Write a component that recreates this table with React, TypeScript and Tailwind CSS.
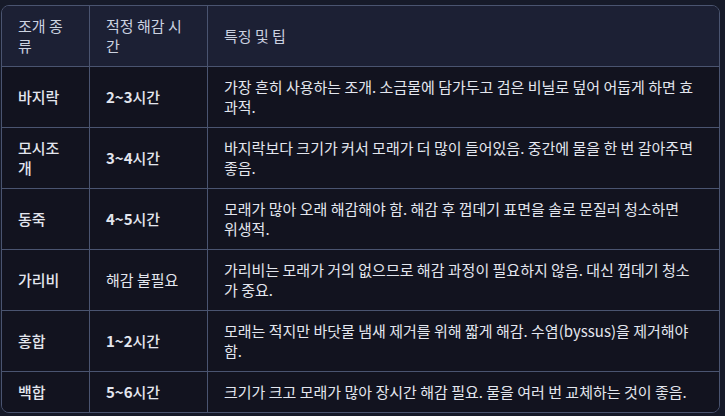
import type { ReactNode } from "react";

const rows: { name: string; time: string; tip: ReactNode }[] = [
  { name: "바지락", time: "2~3시간", tip: "가장 흔히 사용하는 조개. 소금물에 담가두고 검은 비닐로 덮어 어둡게 하면 효과적." },
  { name: "모시조개", time: "3~4시간", tip: "바지락보다 크기가 커서 모래가 더 많이 들어있음. 중간에 물을 한 번 갈아주면 좋음." },
  {
    name: "동죽",
    time: "4~5시간",
    tip: (
      <>
        모래가 많아 오래 해감해야 함. 해감 후 껍데기 표면을 솔로 문질러 청소하면{" "}
        <span className="whitespace-nowrap">위생적.</span>
      </>
    ),
  },
  { name: "가리비", time: "해감 불필요", tip: "가리비는 모래가 거의 없으므로 해감 과정이 필요하지 않음. 대신 껍데기 청소가 중요." },
  { name: "홍합", time: "1~2시간", tip: "모래는 적지만 바닷물 냄새 제거를 위해 짧게 해감. 수염(byssus)을 제거해야 함." },
  { name: "백합", time: "5~6시간", tip: "크기가 크고 모래가 많아 장시간 해감 필요. 물을 여러 번 교체하는 것이 좋음." },
];

// digits bold, hangul regular (as in the screenshot)
function Time({ text }: { text: string }) {
  const m = text.match(/^([\d~]+)(.*)$/);
  if (!m) return <span>{text}</span>;
  return (
    <span>
      <span className="font-bold">{m[1]}</span>
      <span className="font-medium">{m[2]}</span>
    </span>
  );
}

export default function App() {
  return (
    <div className="min-h-screen w-[725px] h-[416px] bg-[#161a29] pt-[5px] pl-px font-['Noto_Sans_CJK_KR','Noto_Sans',sans-serif] text-[15px] leading-[20px]">
      <div className="w-[719px] overflow-hidden rounded-lg border border-[#4a5470]">
        <table className="w-full table-fixed border-separate border-spacing-0">
          <colgroup>
            <col className="w-[88px]" />
            <col className="w-[118px]" />
            <col />
          </colgroup>
          <thead>
            <tr className="bg-[#1c2034] text-[#cbd2e0]">
              <th className="border-r border-b border-[#4a5470] px-4 py-[10px] text-left font-normal">조개 종류</th>
              <th className="border-r border-b border-[#4a5470] px-4 py-[10px] text-left font-normal">적정 해감 시간</th>
              <th className="border-b border-[#4a5470] pl-4 pr-5 py-[10px] text-left font-normal">특징 및 팁</th>
            </tr>
          </thead>
          <tbody className="bg-[#12131f] text-[#e3e6ee]">
            {rows.map((r, i) => {
              const last = i === rows.length - 1;
              return (
                <tr key={r.name}>
                  <td className={`border-r border-[#4a5470] px-4 py-[10px] font-medium ${last ? "" : "border-b"}`}>{r.name}</td>
                  <td className={`border-r border-[#4a5470] px-4 py-[10px] ${last ? "" : "border-b"}`}>
                    <Time text={r.time} />
                  </td>
                  <td className={`border-[#4a5470] pl-4 pr-5 py-[10px] ${last ? "" : "border-b"}`}>{r.tip}</td>
                </tr>
              );
            })}
          </tbody>
        </table>
      </div>
    </div>
  );
}
